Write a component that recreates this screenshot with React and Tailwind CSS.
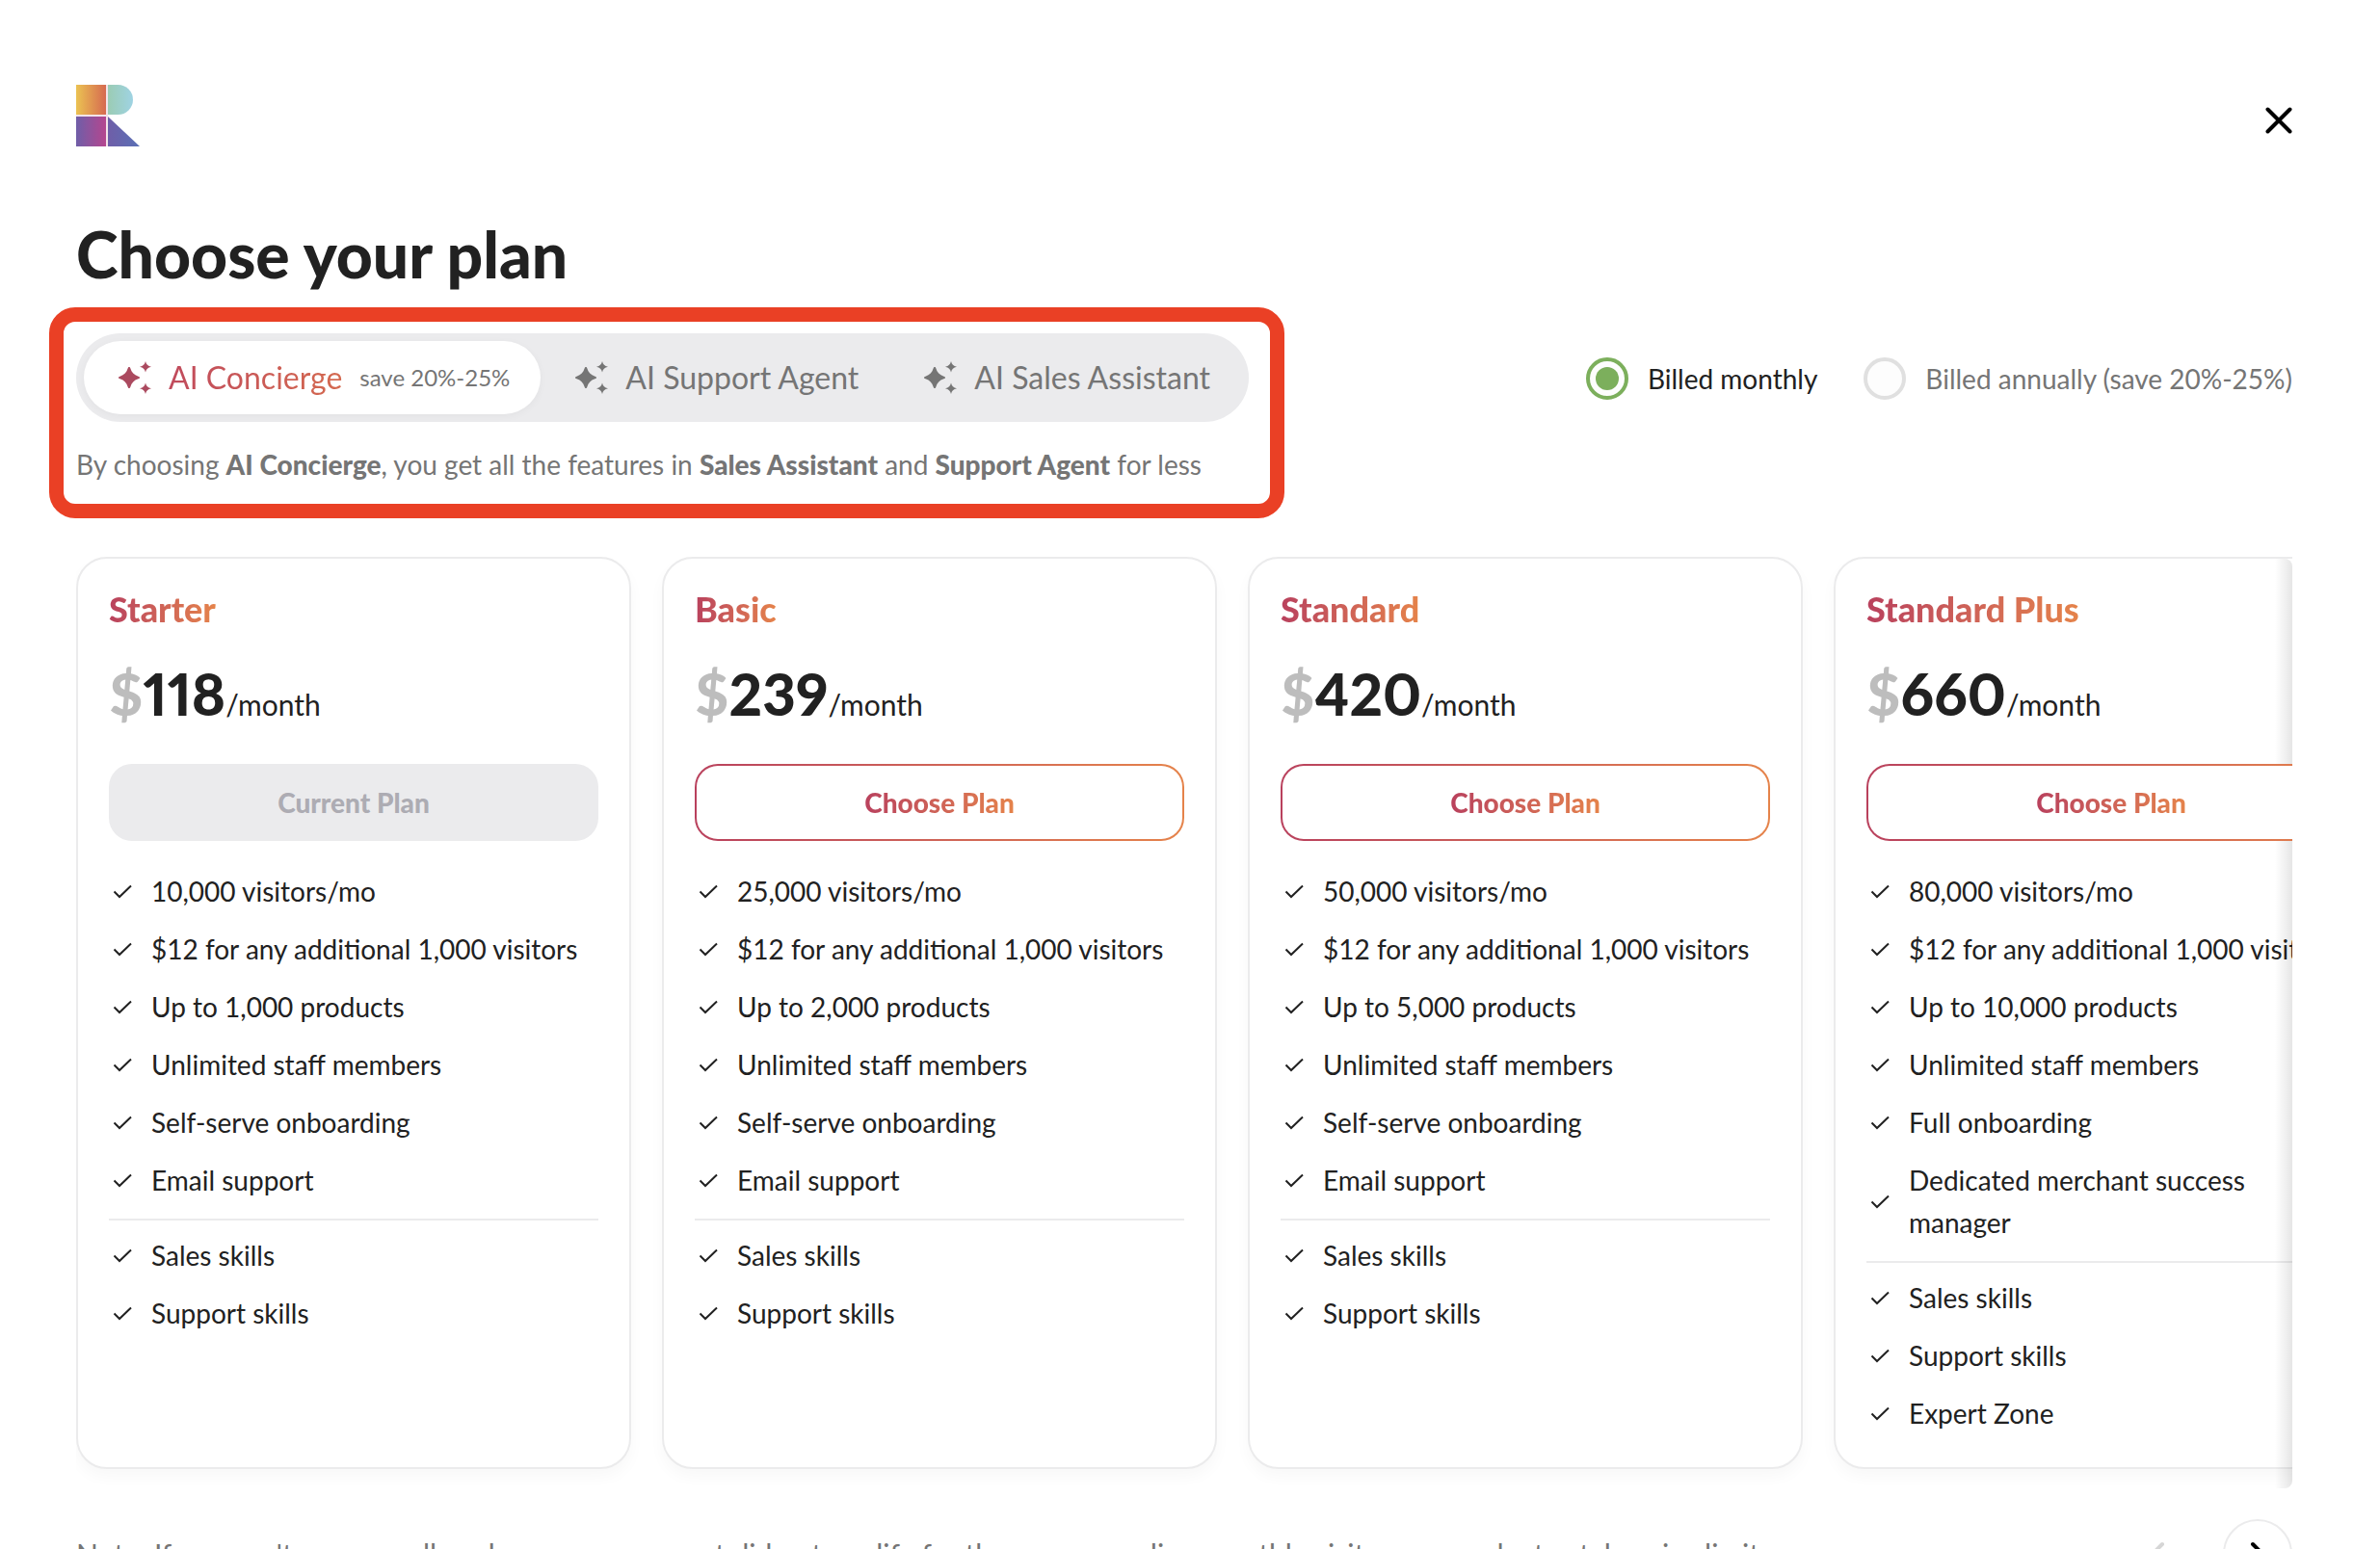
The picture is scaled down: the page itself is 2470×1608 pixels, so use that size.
import { useState } from 'react'

const products = [
	{ id: 'concierge', label: 'AI Concierge', note: 'save 20%-25%' },
	{ id: 'support', label: 'AI Support Agent' },
	{ id: 'sales', label: 'AI Sales Assistant' },
]

const plans = [
	{
		name: 'Starter',
		price: 118,
		current: true,
		features: ['10,000 visitors/mo', '$12 for any additional 1,000 visitors', 'Up to 1,000 products', 'Unlimited staff members', 'Self-serve onboarding', 'Email support'],
		skills: ['Sales skills', 'Support skills'],
	},
	{
		name: 'Basic',
		price: 239,
		features: ['25,000 visitors/mo', '$12 for any additional 1,000 visitors', 'Up to 2,000 products', 'Unlimited staff members', 'Self-serve onboarding', 'Email support'],
		skills: ['Sales skills', 'Support skills'],
	},
	{
		name: 'Standard',
		price: 420,
		features: ['50,000 visitors/mo', '$12 for any additional 1,000 visitors', 'Up to 5,000 products', 'Unlimited staff members', 'Self-serve onboarding', 'Email support'],
		skills: ['Sales skills', 'Support skills'],
	},
	{
		name: 'Standard Plus',
		price: 660,
		features: ['80,000 visitors/mo', '$12 for any additional 1,000 visitors', 'Up to 10,000 products', 'Unlimited staff members', 'Full onboarding', 'Dedicated merchant success manager'],
		skills: ['Sales skills', 'Support skills', 'Expert Zone'],
	},
]

function Logo() {
	return (
		<svg width="66" height="64" viewBox="0 0 66 64" aria-label="Logo" role="img">
			<defs>
				<linearGradient id="logoOrange"><stop stopColor="#ebc252" /><stop offset="1" stopColor="#d66a50" /></linearGradient>
				<linearGradient id="logoTeal"><stop stopColor="#9bccb4" /><stop offset="1" stopColor="#9fd3e3" /></linearGradient>
				<linearGradient id="logoPink"><stop stopColor="#6f5ea8" /><stop offset="1" stopColor="#b5468f" /></linearGradient>
				<linearGradient id="logoBlue"><stop stopColor="#6f5ea8" /><stop offset="1" stopColor="#5a70b5" /></linearGradient>
			</defs>
			<path d="M31 0h2v64h-2zM0 31h33v2H0z" fill="#f3e4ea" />
			<path d="M0 0h31v31H0z" fill="url(#logoOrange)" />
			<path d="M33 0h10.500a15.500 15.500 0 0 1 0 31H33z" fill="url(#logoTeal)" />
			<path d="M0 33h31v31H0z" fill="url(#logoPink)" />
			<path d="M33 33l33 31H33z" fill="url(#logoBlue)" />
		</svg>
	)
}

function Sparkles() {
	return (
		<svg width="34" height="34" viewBox="0 0 34 34" fill="currentColor" className="shrink-0" aria-hidden="true">
			<path d="M11 6c.7 0 1 .4 1.300 1.300C13.600 11.500 16 14.200 20.500 15.700c1 .3 1.500.7 1.500 1.300s-.5 1-1.500 1.300C16 19.800 13.600 22.500 12.300 26.700 12 27.600 11.700 28 11 28s-1-.4-1.300-1.300C8.400 22.500 6 19.800 1.500 18.300.5 18 0 17.600 0 17s.5-1 1.500-1.300C6 14.200 8.400 11.500 9.700 7.300 10 6.400 10.300 6 11 6z" />
			<path d="M28 0c.8 3.400 2.400 4.900 6 5.700-3.600.8-5.200 2.400-6 5.800-.8-3.400-2.400-5-6-5.800 3.600-.8 5.200-2.300 6-5.700z" />
			<path d="M28 22.500c.8 3.400 2.400 4.900 6 5.700-3.600.8-5.200 2.400-6 5.800-.8-3.400-2.400-5-6-5.800 3.600-.8 5.200-2.300 6-5.700z" />
		</svg>
	)
}

function Chevron({ d }) {
	return (
		<svg width="24" height="32" viewBox="0 0 24 32" fill="none" stroke="currentColor" strokeWidth="4" strokeLinecap="round" strokeLinejoin="round" aria-hidden="true">
			<path d={d} />
		</svg>
	)
}

function Feature({ children }) {
	return (
		<li className="flex items-center gap-5">
			<svg width="24" height="24" viewBox="0 0 24 24" fill="none" stroke="currentColor" strokeWidth="2" className="shrink-0" aria-hidden="true">
				<path d="M5.500 12.500l5.500 5.500L23 6.500" />
			</svg>
			<span className="pr-4">{children}</span>
		</li>
	)
}

function PlanCard({ plan }) {
	return (
		<article className="w-[576px] shrink-0 rounded-[32px] border-2 border-[#ebebec] bg-white px-8 pt-8 pb-[34px] shadow-[0_8px_16px_rgba(0,0,0,0.03)]">
			<h2 className="w-fit bg-linear-to-r from-[#b9415d] to-[#e5834a] bg-clip-text text-4xl leading-10 font-black text-transparent">{plan.name}</h2>
			<p className="mt-8 flex items-baseline text-3xl leading-[72px] proportional-nums">
				<span className="text-[60px] leading-[72px] font-black text-[#bdbdbd]">$</span>
				<span className="text-[60px] leading-[72px] font-black">{plan.price}</span>
				<span className="leading-[72px]">/month</span>
			</p>
			{plan.current ? (
				<button type="button" disabled className="mt-[26px] h-20 w-full rounded-3xl bg-[#ebebed] text-[28px] font-black text-[#adacb3]">Current Plan</button>
			) : (
				<button type="button" className="relative z-10 mt-[26px] h-20 w-full rounded-3xl bg-linear-to-r from-[#b9415d] to-[#e5834a] p-0.5">
					<span className="flex h-full items-center justify-center rounded-[22px] bg-white">
						<span className="bg-linear-to-r from-[#b9415d] to-[#e5834a] bg-clip-text text-[28px] font-black text-transparent">Choose Plan</span>
					</span>
				</button>
			)}
			<ul className="mt-[30px] space-y-4 text-[28px] leading-[44px]">
				{plan.features.map(f => <Feature key={f}>{f}</Feature>)}
			</ul>
			<hr className="mt-[18px] mb-[14px] border-t-2 border-[#ebebec]" />
			<ul className="space-y-4 text-[28px] leading-[44px]">
				{plan.skills.map(s => <Feature key={s}>{s}</Feature>)}
			</ul>
		</article>
	)
}

export default function App() {
	const [product, setProduct] = useState('concierge')
	const [billing, setBilling] = useState('monthly')

	const periods = [
		{ value: 'monthly', label: 'Billed monthly' },
		{ value: 'annually', label: 'Billed annually (save 20%-25%)' },
	]

	return (
		<main className="h-screen overflow-hidden bg-white pt-22 pr-[91px] pl-[79px] font-['Lato',sans-serif] text-[#212121]">
			<header className="flex items-start justify-between">
				<Logo />
				<button type="button" aria-label="Close" className="mt-[23px]">
					<svg width="28" height="28" viewBox="0 0 28 28" stroke="#000" strokeWidth="4" strokeLinecap="round" aria-hidden="true">
						<path d="M2.500 2.500l23 23M25.500 2.500l-23 23" />
					</svg>
				</button>
			</header>

			<h1 className="mt-18 text-[66px] leading-[80px] font-black">Choose your plan</h1>

			<div className="mt-[42px] flex items-start justify-between">
				<section className="relative">
					<div className="flex w-fit rounded-full bg-[#ebebed] p-2">
						{products.map(p => (
							<button
								key={p.id}
								type="button"
								onClick={() => setProduct(p.id)}
								className={`flex h-[76px] items-center gap-[18px] rounded-full pr-8 pl-9 text-[32px] ${product === p.id ? 'bg-white text-[#ab4a5f] shadow-[0_2px_8px_rgba(0,0,0,0.04)]' : 'text-[#757575]'}`}
							>
								<Sparkles />
								{product === p.id
									? <span className="bg-linear-to-r from-[#c04a5c] to-[#d4694f] bg-clip-text text-transparent">{p.label}</span>
									: <span>{p.label}</span>}
								{p.note && <span className="text-2xl text-[#757575]">{p.note}</span>}
							</button>
						))}
					</div>
					<p className="mt-6 text-[28px] leading-10 text-[#757575]">
						By choosing <b className="font-black">AI Concierge</b>, you get all the features in <b className="font-black">Sales Assistant</b> and <b className="font-black">Support Agent</b> for less
					</p>
					<div className="pointer-events-none absolute -top-[27px] -right-[37px] -bottom-9 -left-7 rounded-[27px] border-[15px] border-[#ea4025]" />
				</section>

				<fieldset className="mt-[25px] flex gap-12">
					{periods.map(p => (
						<label key={p.value} className={`flex items-center gap-5 text-[28px] leading-[44px] ${billing === p.value ? '' : 'text-[#757575]'}`}>
							<input
								type="radio"
								name="billing"
								checked={billing === p.value}
								onChange={() => setBilling(p.value)}
								className="grid size-11 appearance-none place-items-center rounded-full border-4 border-[#e0e0e0] bg-[#fdfdfd] checked:border-[#7caf5c] before:size-6 before:rounded-full checked:before:bg-[#7caf5c]"
							/>
							{p.label}
						</label>
					))}
				</fieldset>
			</div>

			<div className="relative mt-[76px] overflow-hidden pb-5">
				<div className="flex gap-8">
					{plans.map(p => <PlanCard key={p.name} plan={p} />)}
				</div>
				<div className="absolute top-0.5 right-0 bottom-0 w-[18px] rounded-r-lg bg-linear-to-r from-transparent to-black/10" />
			</div>

			<footer className="mt-8 flex items-center justify-between text-3xl leading-[44px] text-[#757575]">
				<p>Note: If you can't see a small package, your account did not qualify for the corresponding monthly visitors or product catalog size limits</p>
				<div className="flex gap-8">
					<button type="button" disabled aria-label="Previous plans" className="grid size-18 place-items-center text-[#d6d6d6]">
						<Chevron d="M17 6L7 16l10 10" />
					</button>
					<button type="button" aria-label="Next plans" className="grid size-18 place-items-center rounded-full border-2 border-[#ebebec] text-black">
						<Chevron d="M7 6l10 10L7 26" />
					</button>
				</div>
			</footer>
		</main>
	)
}
